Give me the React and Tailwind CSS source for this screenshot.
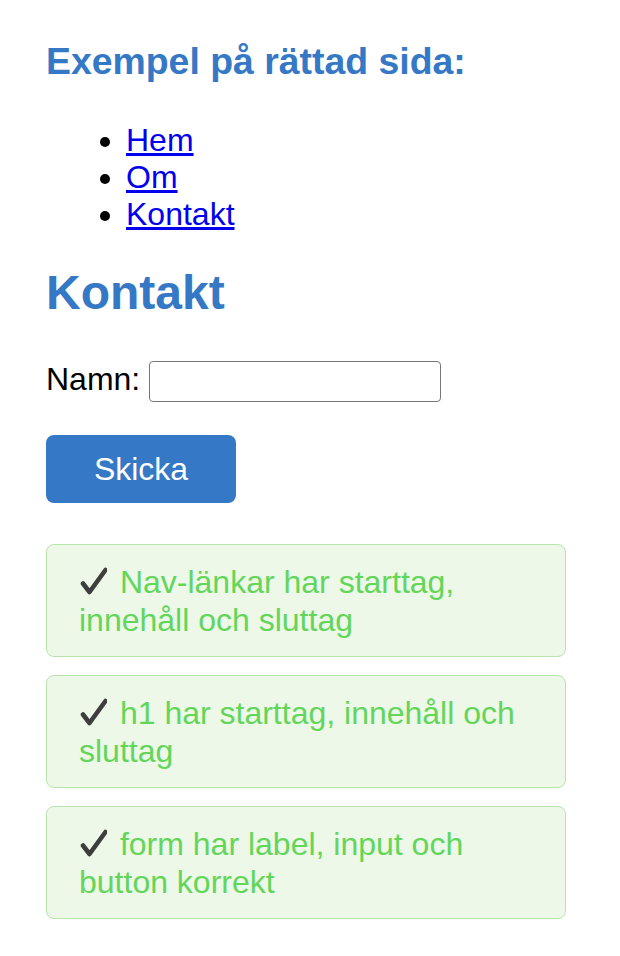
import React from "react";

// Heavy check mark, drawn to match the dark emoji-style glyph
function Check() {
  return (
    <svg
      width="28"
      height="28"
      viewBox="0 0 28 28"
      className="mr-[4px] inline-block align-[-2px]"
      aria-hidden="true"
    >
      <path
        d="M4 16.5 L10.5 25 L26.5 3"
        fill="none"
        stroke="#3e3e3e"
        strokeWidth="4.6"
        strokeLinecap="round"
        strokeLinejoin="round"
      />
    </svg>
  );
}

const checks = [
  "Nav-länkar har starttag, innehåll och sluttag",
  "h1 har starttag, innehåll och sluttag",
  "form har label, input och button korrekt",
];

export default function App() {
  return (
    <div className="min-h-screen bg-white font-['Liberation_Sans',Arial,sans-serif] text-[32px] text-black">
      <div className="w-[566px] pl-[46px] pt-[40px] pb-10">
        {/* Title */}
        <h3 className="text-[37.4px] font-bold leading-[43px] text-[#3578c6]">
          Exempel på rättad sida:
        </h3>

        {/* Nav */}
        <ul className="mt-[39px] list-disc pl-[80px] leading-[36.8px]">
          <li>
            <a href="#" className="text-[#0000ee] underline">Hem</a>
          </li>
          <li>
            <a href="#" className="text-[#0000ee] underline">Om</a>
          </li>
          <li>
            <a href="#" className="text-[#0000ee] underline">Kontakt</a>
          </li>
        </ul>

        {/* Contact */}
        <h2 className="mt-[33px] text-[48px] font-bold leading-[55px] text-[#3578c6]">
          Kontakt
        </h2>

        <form className="mt-[41px]" onSubmit={(e) => e.preventDefault()}>
          <div className="flex items-start">
            <label htmlFor="namn" className="leading-[36.8px]">Namn:</label>
            <input
              id="namn"
              type="text"
              className="ml-[9px] h-[41px] w-[292px] rounded-[4px] border-[1.5px] border-[#767676] bg-white px-2 text-[20px] outline-none"
            />
          </div>
          <button
            type="submit"
            className="mt-[33px] flex h-[68px] w-[190px] items-center justify-center rounded-[8px] bg-[#3578c6] text-[32px] text-white"
          >
            Skicka
          </button>
        </form>

        {/* Result boxes */}
        <div className="mt-[41px] flex flex-col gap-[18px]">
          {checks.map((text) => (
            <div
              key={text}
              className="rounded-[8px] border-[1.5px] border-[#b8e5ae] bg-[#edf8e9] px-[32px] pt-[17.5px] pb-[16.5px] leading-[38.5px] text-[#63d65a]"
            >
              <Check /> {text}
            </div>
          ))}
        </div>
      </div>
    </div>
  );
}
